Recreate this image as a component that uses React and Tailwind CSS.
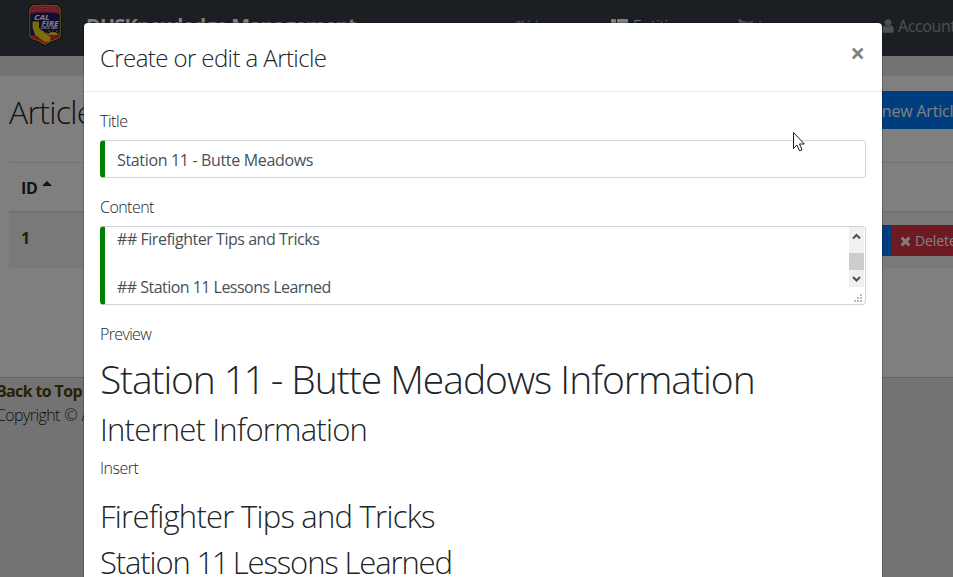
import React from "react";
import { FaHome, FaThList, FaFlag } from "react-icons/fa";

function UserIcon() {
  return (
    <svg className="h-[16px] w-[16px] shrink-0" viewBox="0 0 1792 1792" fill="currentColor">
      <path d="M1536 1399q0 109-62.5 187t-150.5 78h-854q-88 0-150.5-78t-62.5-187q0-85 8.5-160.5t31.5-152 58.5-131 94-89 134.5-34.5q131 128 313 128t313-128q76 0 134.5 34.5t94 89 58.5 131 31.5 152 8.5 160.5zm-256-887q0 159-112.5 271.5t-271.5 112.5-271.5-112.5-112.5-271.5 112.5-271.5 271.5-112.5 271.5 112.5 112.5 271.5z" />
    </svg>
  );
}

function TimesIcon() {
  return (
    <svg className="h-[14px] w-[11px] shrink-0" viewBox="0 0 1408 1792" fill="currentColor">
      <path d="M1298 1322q0 40-28 68l-136 136q-28 28-68 28t-68-28l-294-294-294 294q-28 28-68 28t-68-28l-136-136q-28-28-28-68t28-68l294-294-294-294q-28-28-28-68t28-68l136-136q28-28 68-28t68 28l294 294 294-294q28-28 68-28t68 28l136 136q28 28 28 68t-28 68l-294 294 294 294q28 28 28 68z" />
    </svg>
  );
}

function Logo() {
  return (
    <svg className="h-[42px] w-[34px] shrink-0" viewBox="0 0 34 42">
      <path d="M4 .8Q17-.6 30 .8L33.2 5V32Q33 34.500 30 35.500Q23 37.500 17 41.500Q11 37.500 4 35.500Q1 34.500.8 32V5Z" fill="#d8c020" stroke="#15120a" strokeWidth="1" />
      <path d="M4.500 2.200Q17 .8 29.500 2.200L31.800 5.500V9H2.200V5.500Z" fill="#d82c44" />
      <path d="M2.200 9.500Q17 7.500 31.800 9.500V31H2.200Z" fill="#221a60" />
      <path d="M2.200 31H31.800V32Q31.500 34 29 34.500Q22 36.500 17 40Q12 36.500 5 34.500Q2.500 34 2.200 32Z" fill="#d82840" />
      <path d="M6 4.300Q17 2.800 28 4.300M4 6.800Q17 5.200 30 6.800" stroke="#f0a0a8" strokeWidth=".8" strokeDasharray="1.200 .6" fill="none" />
      <path d="M20 31Q21 28 25 28Q29 28 30 31Z" fill="#ffd52c" />
      <path d="M25 27V25.800M22 28.500L20.500 26.500M28 28.500L29.500 26.500M20.500 30L18 29M29.500 30L31.500 29" stroke="#ffd52c" strokeWidth=".9" />
      <path d="M4.600 17.600H11V24L22.500 33L22 37L17 38.200L12 34.500L7 30.500L4.600 24Z" fill="#f4dc10" />
      <text x="6" y="15.600" fontSize="7.500" fontWeight="700" fontStyle="italic" fontFamily="Open Sans, sans-serif" fill="#fff" textLength="15.500" lengthAdjust="spacingAndGlyphs">CAL</text>
      <text x="13.500" y="21.600" fontSize="7.500" fontWeight="700" fontStyle="italic" fontFamily="Open Sans, sans-serif" fill="#fff" textLength="17" lengthAdjust="spacingAndGlyphs">FIRE</text>
      <text x="13" y="25" fontSize="2.800" fontWeight="700" fontFamily="Open Sans, sans-serif" fill="#fff" textLength="16.500" lengthAdjust="spacingAndGlyphs">SINCE 1885</text>
    </svg>
  );
}

function Navbar() {
  return (
    <nav className="flex h-[56px] items-start overflow-hidden bg-[#373e47] text-[16px] leading-6 whitespace-nowrap text-white/50">
      <div className="flex w-[511px] shrink-0 items-start pt-[4px] pl-[28px]">
        <Logo />
        <span className="mt-[7px] ml-[24px] text-[20px] leading-[30px] font-bold tracking-[-0.8px] text-white">DUSKnowledge Management</span>
      </div>
      <div className="flex w-[100px] shrink-0 items-center gap-[1px] pt-[14px]"><FaHome size={15} />Home</div>
      <div className="flex w-[127px] shrink-0 items-center gap-[5px] pt-[14px] tracking-[-0.2px] text-white"><FaThList size={17} />Entities</div>
      <div className="flex w-[142px] shrink-0 items-center gap-[5px] pt-[14px]"><FaFlag size={15} />Language</div>
      <div className="flex shrink-0 items-center gap-[2px] pt-[14px] font-normal"><UserIcon /><span className="tracking-[-0.4px]">Account</span></div>
    </nav>
  );
}

function ArticlesPage() {
  return (
    <div className="h-full overflow-hidden bg-[#e4e7e4] font-light text-[#212529]">
      <Navbar />
      <main className="mt-[20px] h-[301px] bg-white pt-[15px] pl-[9px] whitespace-nowrap">
        <div className="flex items-start justify-between">
          <h1 className="text-[32px] leading-[41px] tracking-[-0.7px]">Articles</h1>
          <button className="h-[38px] w-[164px] shrink-0 bg-[#007bff] pt-px pl-[28px] text-left text-[16px] leading-[38px] font-normal tracking-[-0.2px] text-white">+ Create new Article</button>
        </div>
        <div className="mt-[30px] border-t border-[#dee2e6]">
          <div className="flex h-[50px] items-center gap-[4px] border-b-2 border-[#dee2e6] pl-[12px] font-bold">
            <span className="pt-px tracking-[-0.3px]">ID</span>
            <span className="mb-[8px] border-x-[5px] border-b-[5px] border-x-transparent border-b-[#212529]" />
          </div>
          <div className="flex h-[55px] items-start justify-between bg-[#f2f2f2] pl-[12px]">
            <span className="pt-[13px] font-bold text-[#533f03]">1</span>
            <div className="mt-[12px] flex h-[31px] w-[130px] text-[14px] font-normal text-white">
              <span className="w-[66px] shrink-0 bg-[#007bff]" />
              <span className="flex flex-1 items-center gap-[4px] border-l-2 border-[#007bff] bg-[#dc3545] pl-[9px] tracking-[-0.1px]"><TimesIcon />Delete</span>
            </div>
          </div>
        </div>
      </main>
      <footer className="border-t border-[#c4c8c6] text-[16px] leading-6 whitespace-nowrap">
        <div className="-ml-[4px] pt-px">
          <div className="font-bold tracking-[-0.65px] text-[#533f03]">Back to Top</div>
          <div className="tracking-[-0.6px] [word-spacing:1px]">Copyright © All rights reserved</div>
        </div>
      </footer>
    </div>
  );
}

function Scrollbar() {
  return (
    <div className="flex h-[60px] w-[15px] shrink-0 flex-col items-center bg-[#f0f0f0] text-[#505050]">
      <svg className="h-[26px] w-[15px]" viewBox="0 0 15 26"><path d="M4 11.500L7.500 8L11 11.500" fill="none" stroke="currentColor" strokeWidth="2" /></svg>
      <div className="h-[17px] w-full bg-[#cdcdcd]" />
      <svg className="h-[17px] w-[15px]" viewBox="0 0 15 17"><path d="M4 7L7.500 10.500L11 7" fill="none" stroke="currentColor" strokeWidth="2" /></svg>
    </div>
  );
}

function Dialog() {
  return (
    <section className="absolute top-[22px] left-[83px] h-[700px] w-[800px] rounded-[5px] border border-black/20 bg-white bg-clip-padding font-light text-[#212529]">
      <header className="flex h-[69px] items-start justify-between border-b border-[#e9ecef] px-[16px] pt-[17px]">
        <h4 className="text-[24px] leading-[36px] tracking-[-0.59px]">Create or edit a Article</h4>
        <span className="mt-[-5px] mr-[1px] text-[26px] leading-[36px] font-bold text-black/50">×</span>
      </header>
      <div className="p-[16px] text-[16px] leading-6">
        <label className="block pt-px"><span className="tracking-[-0.45px]">Title</span></label>
        <div className="mt-[7px] flex h-[38px] items-center rounded border border-l-[5px] border-[#ced4da] border-l-[#008000] pt-[2px] pl-[12px] font-normal text-[#495057]"><span className="tracking-[-0.34px]">Station 11 - Butte Meadows</span></div>
        <label className="mt-[16px] block pt-px"><span className="tracking-[-0.55px]">Content</span></label>
        <div className="mt-[7px] flex h-[79px] justify-between overflow-hidden rounded border border-l-[5px] border-[#ced4da] border-l-[#008000] pl-[12px] font-normal text-[#495057]">
          <div>
            <p className="tracking-[-0.46px]">## Firefighter Tips and Tricks</p>
            <p className="mt-6 tracking-[-0.53px]">## Station 11 Lessons Learned</p>
          </div>
          <div className="w-[16px]">
            <Scrollbar />
            <svg className="mt-[7px] ml-[5px] h-[9px] w-[9px] text-[#bcbcbc]" viewBox="0 0 9 9" fill="currentColor"><path d="M6 0h2v2H6zM3 3h2v2H3zM6 3h2v2H6zM0 6h2v2H0zM3 6h2v2H3zM6 6h2v2H6z" /></svg>
          </div>
        </div>
        <label className="mt-[16px] block pt-px"><span className="tracking-[-0.65px]">Preview</span></label>
        <article className="mt-[9px]">
          <h1 className="text-[39px] leading-[48px] tracking-[-1.150px]"><span>Station <span className="tracking-[-2.500px]">11 </span>- <span className="tracking-[-1.020px]">Butte Meadows Information</span></span></h1>
          <h2 className="mt-[7px] text-[31px] leading-[38px] tracking-[-0.780px]"><span>Internet Information</span></h2>
          <p className="mt-[8px] tracking-[-0.5px]">Insert</p>
          <h2 className="mt-[17px] text-[31px] leading-[38px] tracking-[-0.750px]"><span>Firefighter Tips and Tricks</span></h2>
          <h2 className="mt-[8px] text-[31px] leading-[38px] tracking-[-1.130px]"><span>Station <span className="tracking-[-2.400px]">11 </span>Lessons Learned</span></h2>
        </article>
      </div>
    </section>
  );
}

export default function App() {
  return (
    <div className="relative h-[577px] w-[953px] overflow-hidden font-['Open_Sans','Noto_Sans',sans-serif]">
      <ArticlesPage />
      <div className="absolute inset-0 bg-black/50" />
      <Dialog />
      <svg className="absolute top-[131px] left-[792px] h-[22px] w-[14px]" viewBox="0 0 14 22">
        <path d="M1.500 1.500V17.500L5 14L7.500 19.800L10 18.700L7.500 13H12.300Z" fill="#fff" stroke="#1a1a2a" strokeWidth="1" />
      </svg>
    </div>
  );
}
